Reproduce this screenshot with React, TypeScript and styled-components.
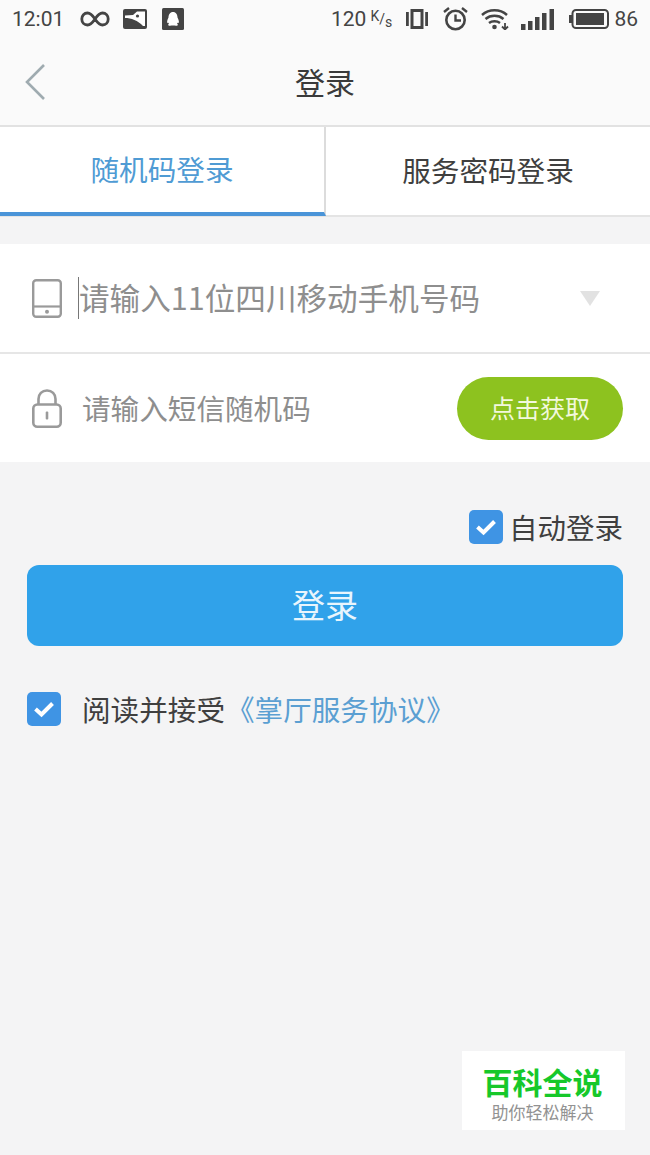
import React from 'react';
import styled, { createGlobalStyle } from 'styled-components';

const GlobalStyle = createGlobalStyle`
  html, body {
    margin: 0;
    padding: 0;
    background: #f4f4f5;
  }
  * {
    box-sizing: border-box;
  }
`;

const Page = styled.div`
  width: 650px;
  height: 1155px;
  position: relative;
  overflow: hidden;
  background: #f4f4f5;
  font-family: "Noto Sans CJK SC", "Noto Sans", sans-serif;
`;

const StatusBar = styled.div`
  height: 38px;
  background: #fafafa;
  display: flex;
  align-items: center;
  justify-content: space-between;
  padding: 0 12px;
  color: #444;
  font-family: Roboto, sans-serif;
  font-size: 21px;
`;

const StatusGroup = styled.div`
  display: flex;
  align-items: center;
`;

const Clock = styled.span`
  width: 68px;
`;

const Speed = styled.span`
  margin-right: 15px;
  display: flex;
  align-items: center;
`;

const SpeedUnit = styled.span`
  display: flex;
  height: 20px;
  width: 21px;
  margin-left: 4px;
  font-size: 14px;
  line-height: 14px;
`;

const SpeedPart = styled.span<{ $align: string }>`
  align-self: ${(p) => p.$align};
`;

const NavBar = styled.div`
  height: 89px;
  background: #fafafa;
  border-bottom: 2px solid #e2e2e2;
  display: flex;
  align-items: center;
  justify-content: center;
  position: relative;
  padding-bottom: 2px;
`;

const NavTitle = styled.h1`
  margin: 0;
  font-size: 30px;
  font-weight: 400;
  color: #3a3a3a;
  line-height: 40px;
`;

const BackIcon = styled.svg`
  position: absolute;
  left: 24px;
  top: 25px;
`;

const Tabs = styled.div`
  height: 90px;
  display: flex;
  background: #fff;
  border-bottom: 2px solid #e4e4e4;
`;

const Tab = styled.div<{ $active?: boolean }>`
  flex: 1;
  height: ${(p) => (p.$active ? '89px' : '88px')};
  display: flex;
  align-items: center;
  justify-content: center;
  padding-bottom: ${(p) => (p.$active ? '2px' : '4px')};
  font-size: 28.6px;
  color: ${(p) => (p.$active ? '#4f9bd4' : '#3f3f3f')};
  border-bottom: ${(p) => (p.$active ? '4px solid #4a94d8' : 'none')};
  border-right: ${(p) => (p.$active ? '2px solid #dcdcdc' : 'none')};
`;

const Form = styled.div`
  margin-top: 27px;
  background: #fff;
`;

const FormRow = styled.div<{ $last?: boolean }>`
  height: ${(p) => (p.$last ? '108px' : '110px')};
  display: flex;
  align-items: center;
  padding: 0 27px 0 32px;
  border-bottom: ${(p) => (p.$last ? 'none' : '2px solid #e6e6e6')};
`;

const FieldIcon = styled.svg`
  flex: none;
`;

const Caret = styled.span`
  width: 1px;
  height: 42px;
  background: #777;
  margin-left: 16px;
  flex: none;
`;

const Placeholder = styled.span<{ $gap: number; $size: number }>`
  margin: -2px 0 0 ${(p) => p.$gap}px;
  font-size: ${(p) => p.$size}px;
  color: #8e8e8e;
  white-space: nowrap;
  flex: 1;
`;

const DropArrow = styled.span`
  width: 0;
  height: 0;
  border-left: 10px solid transparent;
  border-right: 10px solid transparent;
  border-top: 15px solid #e2e2e2;
  margin-right: 23px;
  flex: none;
`;

const FetchButton = styled.button`
  width: 166px;
  height: 63px;
  border: none;
  border-radius: 32px;
  background: #8dc21f;
  color: #f2f8dc;
  font-family: inherit;
  font-size: 25px;
  padding: 0 0 2px;
`;

const AutoLogin = styled.div`
  display: flex;
  justify-content: flex-end;
  align-items: center;
  height: 34px;
  margin-top: 48px;
  padding-right: 27px;
  gap: 6px;
  font-size: 28.5px;
  color: #3f3f3f;
`;

const AutoLabel = styled.span`
  margin-top: -2px;
`;

const CheckBox = styled.span`
  width: 34px;
  height: 34px;
  border-radius: 5px;
  background: #3f94e4;
  display: flex;
  align-items: center;
  justify-content: center;
  flex: none;
`;

const LoginButton = styled.button`
  display: block;
  width: 596px;
  height: 81px;
  margin: 21px 27px 0;
  border: none;
  border-radius: 12px;
  background: #30a2ea;
  color: #e8f5fd;
  font-family: inherit;
  font-size: 33px;
  padding: 0 0 4px;
`;

const Agreement = styled.div`
  display: flex;
  align-items: center;
  margin-top: 46px;
  padding-left: 27px;
  font-size: 28.6px;
  color: #3f3f3f;
  height: 34px;
`;

const AgreementText = styled.span`
  margin-left: 21px;
  margin-top: -2px;
  white-space: nowrap;
`;

const AgreementLink = styled.span`
  color: #5b9fd2;
  margin-left: 1px;
`;

const Watermark = styled.div`
  position: absolute;
  left: 462px;
  top: 1051px;
  width: 163px;
  height: 79px;
  background: #fff;
  display: flex;
  flex-direction: column;
  align-items: center;
  padding: 15px 2px 0 0;
  gap: 7px;
`;

const WatermarkTitle = styled.div`
  font-size: 30px;
  line-height: 30px;
  font-weight: 700;
  color: #16c82a;
`;

const WatermarkSub = styled.div`
  font-size: 17px;
  line-height: 18px;
  color: #929292;
`;

const Check = () => (
  <svg width="24" height="20" viewBox="0 0 24 20">
    <path d="M3.5 10 L9.5 15.5 L20.5 4.5" fill="none" stroke="#fff" strokeWidth="4" />
  </svg>
);

export default function App() {
  return (
    <Page>
      <GlobalStyle />
      <StatusBar>
        <StatusGroup>
          <Clock>12:01</Clock>
          <svg width="30" height="16" viewBox="0 0 30 16" style={{ marginRight: 13 }}>
            <path
              d="M15 8 C12 3.5 10 2 7.5 2 C4.2 2 1.8 4.5 1.8 8 C1.8 11.5 4.2 14 7.5 14 C10 14 12 12.5 15 8 C18 3.5 20 2 22.5 2 C25.8 2 28.2 4.5 28.2 8 C28.2 11.5 25.8 14 22.5 14 C20 14 18 12.5 15 8 Z"
              fill="none"
              stroke="#444"
              strokeWidth="2.8"
            />
          </svg>
          <svg width="24" height="20" viewBox="0 0 24 20" style={{ marginRight: 15 }}>
            <rect width="24" height="20" rx="2" fill="#444" />
            <path d="M2 6.5 L10 6 L14 2.5 L22 2.5 L22 17 L20 17 C15 11.5 8 9 2 9 Z" fill="#fff" />
            <circle cx="14.5" cy="7" r="1.6" fill="#444" />
          </svg>
          <svg width="22" height="22" viewBox="0 0 22 22">
            <rect width="22" height="22" rx="1.5" fill="#444" />
            <path d="M11 4 C14 4 15.5 6.5 15.5 9.5 C16.5 11.5 17.5 14 16.5 15 C16 15.3 15.5 15 15 14.5 C15 16 16.5 16.5 15.5 17.5 C14 18 12.5 17.5 11 17.5 C9.5 17.5 8 18 6.5 17.5 C5.5 16.5 7 16 7 14.5 C6.5 15 6 15.3 5.5 15 C4.5 14 5.5 11.5 6.5 9.5 C6.5 6.5 8 4 11 4 Z" fill="#fff" />
          </svg>
        </StatusGroup>
        <StatusGroup>
          <Speed>
            120
            <SpeedUnit>
              <SpeedPart $align="flex-start">K</SpeedPart>
              <SpeedPart $align="center">/</SpeedPart>
              <SpeedPart $align="flex-end">s</SpeedPart>
            </SpeedUnit>
          </Speed>
          <svg width="22" height="20" viewBox="0 0 22 20" style={{ marginRight: 15 }}>
            <rect x="0" y="3" width="2.8" height="14" fill="#444" />
            <rect x="19.2" y="3" width="2.8" height="14" fill="#444" />
            <rect x="6" y="1.5" width="10" height="17" fill="none" stroke="#444" strokeWidth="3" />
          </svg>
          <svg width="25" height="24" viewBox="0 0 25 24" style={{ marginRight: 13 }}>
            <circle cx="12.5" cy="13" r="9.2" fill="none" stroke="#444" strokeWidth="2.6" />
            <path d="M12.5 7.5 V13.5 H18" fill="none" stroke="#444" strokeWidth="2.4" />
            <path d="M1 5 L6 1 M24 5 L19 1" stroke="#444" strokeWidth="2.4" />
          </svg>
          <svg width="28" height="22" viewBox="0 0 28 22" style={{ marginRight: 12 }}>
            <path d="M1 7 C8 0.8 19 0.8 26 7 M4.5 11 C9.5 6.8 17.5 6.8 22.5 11 M8 15 C11 12.7 16 12.7 19 15" fill="none" stroke="#444" strokeWidth="2.5" />
            <circle cx="13.5" cy="19" r="2.3" fill="#444" />
            <path d="M24 15 V21 M21 18.5 L24 21.5 L27 18.5" fill="none" stroke="#444" strokeWidth="1.8" />
          </svg>
          <svg width="33" height="21" viewBox="0 0 33 21" style={{ marginRight: 15 }}>
            <rect x="0" y="15" width="4.5" height="6" fill="#444" />
            <rect x="7" y="12" width="4.5" height="9" fill="#444" />
            <rect x="14" y="8" width="4.5" height="13" fill="#444" />
            <rect x="21" y="4" width="4.5" height="17" fill="#444" />
            <rect x="28.5" y="0" width="4.5" height="21" fill="#444" />
          </svg>
          <svg width="40" height="20" viewBox="0 0 40 20" style={{ marginRight: 5 }}>
            <rect x="0" y="6" width="3" height="8" fill="#444" />
            <rect x="3.5" y="1" width="35.5" height="18" rx="3.5" fill="none" stroke="#444" strokeWidth="2" />
            <rect x="7" y="4" width="28" height="12" fill="#444" />
          </svg>
          <span>86</span>
        </StatusGroup>
      </StatusBar>

      <NavBar>
        <BackIcon width="24" height="38" viewBox="0 0 24 38">
          <path d="M20 2 L3 19 L20 36" fill="none" stroke="#9fabb0" strokeWidth="2.6" />
        </BackIcon>
        <NavTitle>登录</NavTitle>
      </NavBar>

      <Tabs>
        <Tab $active>随机码登录</Tab>
        <Tab>服务密码登录</Tab>
      </Tabs>

      <Form>
        <FormRow>
          <FieldIcon width="30" height="39" viewBox="0 0 30 39">
            <rect x="1.2" y="1.2" width="27.6" height="36.6" rx="3" fill="none" stroke="#9a9a9a" strokeWidth="2.4" />
            <path d="M1.2 27.5 H28.8" stroke="#9a9a9a" strokeWidth="2.2" />
            <circle cx="15" cy="32.8" r="2" fill="#9a9a9a" />
          </FieldIcon>
          <Caret />
          <Placeholder $gap={0} $size={30.6}>请输入11位四川移动手机号码</Placeholder>
          <DropArrow />
        </FormRow>
        <FormRow $last>
          <FieldIcon width="30" height="39" viewBox="0 0 30 39">
            <path d="M6.5 16 V10 C6.5 5 10 1.5 15 1.5 C20 1.5 23.5 5 23.5 10 V16" fill="none" stroke="#9a9a9a" strokeWidth="2.6" />
            <rect x="1.3" y="15.5" width="27.4" height="22.2" rx="4" fill="none" stroke="#9a9a9a" strokeWidth="2.6" />
            <rect x="13.7" y="22.5" width="2.6" height="8" rx="1" fill="#9a9a9a" />
          </FieldIcon>
          <Placeholder $gap={20} $size={28.6}>请输入短信随机码</Placeholder>
          <FetchButton>点击获取</FetchButton>
        </FormRow>
      </Form>

      <AutoLogin>
        <CheckBox>
          <Check />
        </CheckBox>
        <AutoLabel>自动登录</AutoLabel>
      </AutoLogin>

      <LoginButton>登录</LoginButton>

      <Agreement>
        <CheckBox>
          <Check />
        </CheckBox>
        <AgreementText>
          阅读并接受<AgreementLink>《掌厅服务协议》</AgreementLink>
        </AgreementText>
      </Agreement>

      <Watermark>
        <WatermarkTitle>百科全说</WatermarkTitle>
        <WatermarkSub>助你轻松解决</WatermarkSub>
      </Watermark>
    </Page>
  );
}
